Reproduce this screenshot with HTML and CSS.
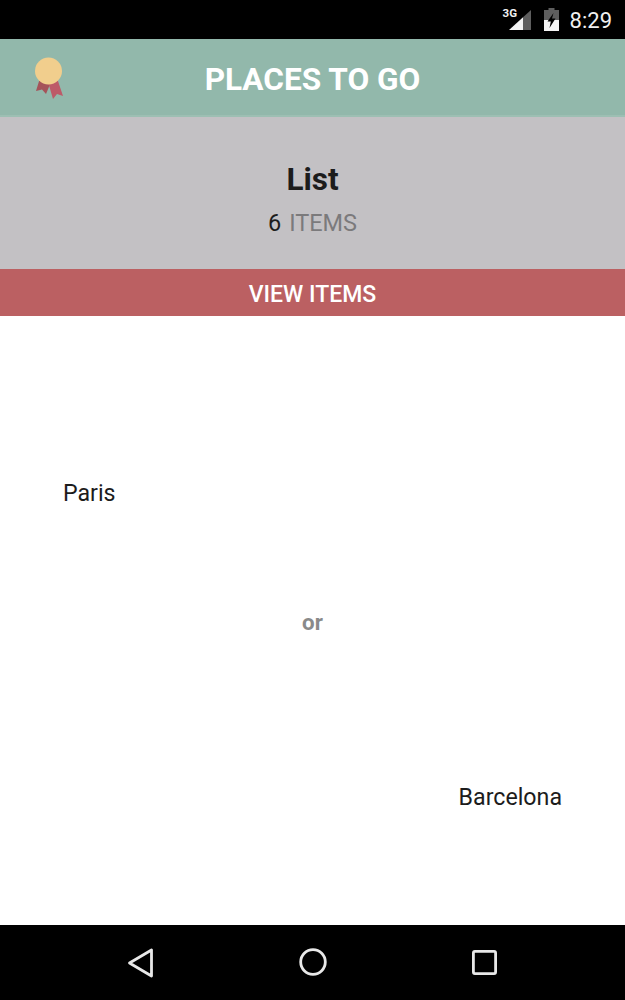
FILE: index.html
```html
<!DOCTYPE html>
<html lang="en">
<head>
<meta charset="utf-8">
<title>Places to go</title>
<link rel="stylesheet" href="styles.css">
</head>
<body>
<div class="phone">
  <div class="statusbar">
    <div class="signalwrap">
      <span class="net">3G</span>
      <svg class="signal" width="22" height="20" viewBox="0 0 22 20"><path d="M0 20 L14 7.3 V20 Z" fill="#f4f4f4"/><path d="M14 7.3 L22 0 V20 H14 Z" fill="#5e5e5e"/></svg>
    </div>
    <svg class="battery" width="15" height="23" viewBox="0 0 15 23"><path d="M4.5 0 H10.5 V2 H15 V23 H0 V2 H4.5 Z" fill="#5e5e5e"/><path d="M0 12 H15 V23 H0 Z" fill="#f4f4f4"/><path d="M9.5 5 L3.5 13.5 H6.8 L5.5 20 L11.5 10.5 H8 Z" fill="#000"/></svg>
    <span class="clock">8:29</span>
  </div>
  <header class="appbar">
    <svg class="medal" width="30" height="44" viewBox="0 0 30 44">
      <path d="M6 22 L2 35 L8 33.5 L12 38 L17 26 Z" fill="#a5535a"/>
      <path d="M14 26 L19 43 L23 38 L29 40 L23 22 Z" fill="#bd5a68"/>
      <circle cx="14.5" cy="15" r="13.5" fill="#f1ce8d"/>
    </svg>
    <h1 class="apptitle">PLACES TO GO</h1>
  </header>
  <section class="summary">
    <h2 class="listname">List</h2>
    <p class="count"><span class="num">6</span> <span class="unit">ITEMS</span></p>
  </section>
  <div class="viewbtn">VIEW ITEMS</div>
  <main class="content">
    <div class="choice choice-left">Paris</div>
    <div class="or">or</div>
    <div class="choice choice-right">Barcelona</div>
  </main>
  <nav class="navbar">
    <svg class="nav-back" width="26" height="30" viewBox="0 0 26 30"><path d="M2.5 15 L24.5 2 V28 Z" fill="none" stroke="#e8e8e8" stroke-width="2.8" stroke-linejoin="round"/></svg>
    <svg class="nav-home" width="28" height="28" viewBox="0 0 28 28"><circle cx="14" cy="14" r="12.3" fill="none" stroke="#e8e8e8" stroke-width="2.8"/></svg>
    <svg class="nav-recent" width="25" height="25" viewBox="0 0 25 25"><rect x="1.4" y="1.4" width="22.2" height="22.2" rx="1.5" fill="none" stroke="#e8e8e8" stroke-width="2.8"/></svg>
  </nav>
</div>
</body>
</html>
```
FILE: styles.css
```css
* { box-sizing: border-box; margin: 0; padding: 0; }
html, body { background: #fff; }
body { font-family: Roboto, "Liberation Sans", sans-serif; }
.phone { width: 625px; height: 1000px; display: flex; flex-direction: column; overflow: hidden; }
.statusbar { height: 39px; background: #000; color: #f0f0f0; display: flex; align-items: flex-start; justify-content: flex-end; padding-right: 13px; flex: none; }
.signalwrap { position: relative; width: 22px; height: 20px; margin-top: 10px; margin-right: 13px; }
.signal { display: block; }
.net { position: absolute; left: -6px; top: -3px; font-size: 11.5px; font-weight: 700; line-height: 13px; }
.battery { margin-top: 8px; margin-right: 11px; }
.clock { font-size: 22px; line-height: 24px; margin-top: 9px; }
.appbar { height: 78px; background: #92b8ab; display: flex; align-items: center; justify-content: center; position: relative; flex: none; border-bottom: 2px solid #9dbfb3; padding-top: 4px; }
.medal { position: absolute; left: 34px; top: 17px; }
.apptitle { font-size: 31.6px; font-weight: 700; color: #fff; }
.summary { height: 152px; background: #c3c1c4; display: flex; flex-direction: column; align-items: center; flex: none; padding-top: 43px; }
.listname { font-size: 31.5px; font-weight: 700; color: #1c1c1c; line-height: 40px; }
.count { font-size: 23.5px; line-height: 28px; margin-top: 9px; display: flex; gap: 8px; }
.num { color: #1c1c1c; }
.unit { color: #7b7a7c; }
.viewbtn { height: 47px; background: #bb6062; color: #fff; font-size: 23px; font-weight: 500; display: flex; align-items: center; justify-content: center; flex: none; padding-top: 3px; }
.content { flex: 1; background: #fff; display: flex; flex-direction: column; padding: 164px 63px 0; font-size: 23.2px; color: #1c1c1c; }
.choice { line-height: 26px; }
.choice-right { align-self: flex-end; margin-top: 149px; }
.or { align-self: center; margin-top: 103px; font-weight: 700; color: #8a8a8a; font-size: 22.3px; line-height: 26px; }
.navbar { height: 75px; background: #000; flex: none; display: flex; align-items: center; justify-content: space-between; padding: 0 128px 0 127px; }
.nav-home { margin-left: 1px; margin-top: -1px; }
.nav-back { margin-top: 1px; }
.nav-recent { margin-top: -1px; }
```
